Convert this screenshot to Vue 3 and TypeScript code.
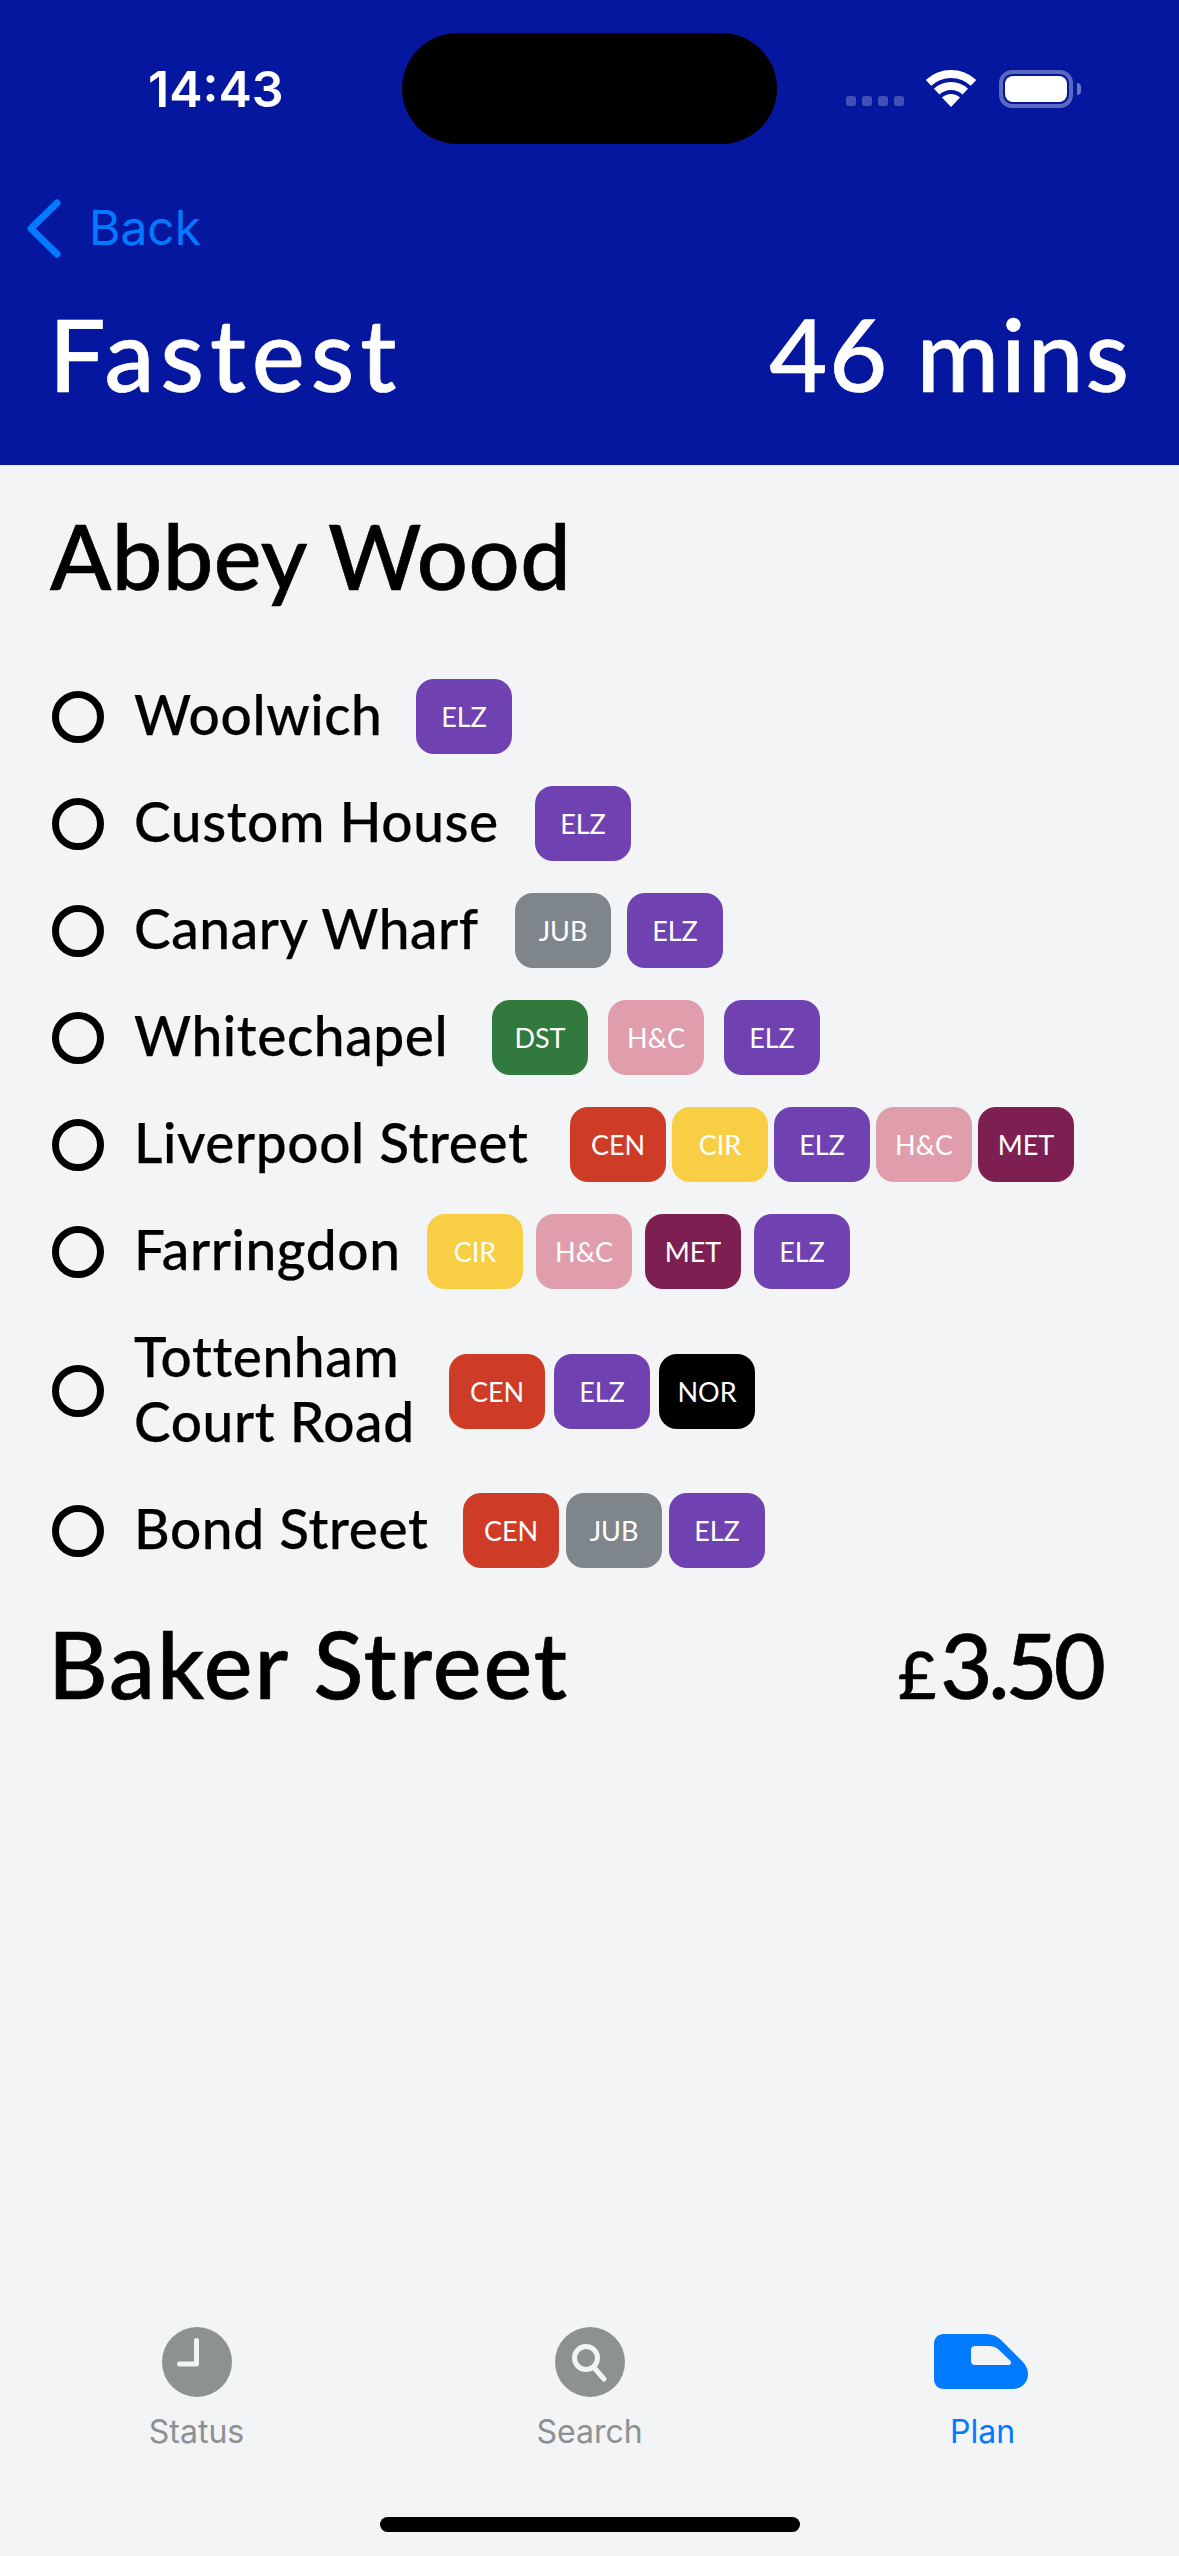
<script setup lang="ts">
type Line = 'CEN' | 'CIR' | 'ELZ' | 'H&C' | 'MET' | 'JUB' | 'DST' | 'NOR'

interface Stop {
  name: string
  nameWidth: number
  gap: number
  lines: Line[]
}

const lineClass: Record<Line, string> = {
  CEN: 'central',
  CIR: 'circle',
  ELZ: 'elizabeth',
  'H&C': 'hammersmith',
  MET: 'metropolitan',
  JUB: 'jubilee',
  DST: 'district',
  NOR: 'northern',
}

// badge start depends on how wide the station name is
const stops: Stop[] = [
  { name: 'Woolwich', nameWidth: 282, gap: 7, lines: ['ELZ'] },
  { name: 'Custom House', nameWidth: 401, gap: 7, lines: ['ELZ'] },
  { name: 'Canary Wharf', nameWidth: 381, gap: 16, lines: ['JUB', 'ELZ'] },
  { name: 'Whitechapel', nameWidth: 358, gap: 20, lines: ['DST', 'H&C', 'ELZ'] },
  { name: 'Liverpool Street', nameWidth: 436, gap: 6, lines: ['CEN', 'CIR', 'ELZ', 'H&C', 'MET'] },
  { name: 'Farringdon', nameWidth: 293, gap: 13, lines: ['CIR', 'H&C', 'MET', 'ELZ'] },
  { name: 'Tottenham Court Road', nameWidth: 315, gap: 9, lines: ['CEN', 'ELZ', 'NOR'] },
  { name: 'Bond Street', nameWidth: 329, gap: 7, lines: ['CEN', 'JUB', 'ELZ'] },
]
</script>

<template>
  <div class="screen">
    <header class="top">
      <div class="status-bar">
        <span class="time">14:43</span>
        <div class="island"></div>
        <div class="dots"><i></i><i></i><i></i><i></i></div>
        <svg class="wifi" width="50" height="37" viewBox="0 0 50 37" fill="none">
          <path d="M2.5 12.9A33 33 0 0 1 47.5 12.9" stroke="#fff" stroke-width="8" />
          <path d="M10.7 21.6A21 21 0 0 1 39.3 21.6" stroke="#fff" stroke-width="8" />
          <path d="M25 37L16 27.5A13 13 0 0 1 34 27.5Z" fill="#fff" />
        </svg>
        <div class="battery"><div class="battery-fill"></div></div>
        <div class="battery-nub"></div>
      </div>

      <div class="back">
        <svg width="38" height="64" viewBox="0 0 38 64" fill="none">
          <path d="M31 7L5 32.5L31 58" stroke="#007AFF" stroke-width="7" stroke-linecap="round" stroke-linejoin="round" />
        </svg>
        <span>Back</span>
      </div>

      <div class="summary">
        <span class="summary-label">Fastest</span>
        <span>46 mins</span>
      </div>
    </header>

    <main class="journey">
      <h1 class="terminus">Abbey Wood</h1>

      <ul class="stops">
        <li v-for="stop in stops" :key="stop.name" class="stop">
          <span class="ring"></span>
          <span class="stop-name" :style="{ width: stop.nameWidth + 'px' }">{{ stop.name }}</span>
          <div class="badges" :style="{ gap: stop.gap + 'px' }">
            <span v-for="line in stop.lines" :key="line" class="badge" :class="lineClass[line]">{{ line }}</span>
          </div>
        </li>
      </ul>

      <div class="destination">
        <span>Baker Street</span>
        <span class="fare"><small>£</small>3.50</span>
      </div>
    </main>

    <nav class="tabs">
      <div class="tab">
        <svg width="70" height="70" viewBox="0 0 70 70">
          <circle cx="35" cy="35" r="35" fill="#8E9192" />
          <path d="M34.5 13.500V37H17.500" fill="none" stroke="#F2F4F6" stroke-width="5" stroke-linecap="round" stroke-linejoin="round" />
        </svg>
        <span>Status</span>
      </div>
      <div class="tab">
        <svg width="70" height="70" viewBox="0 0 70 70">
          <circle cx="35" cy="35" r="35" fill="#8E9192" />
          <circle cx="31" cy="31" r="11.500" fill="none" stroke="#F2F4F6" stroke-width="5" />
          <path d="M38.500 40L49 52" fill="none" stroke="#F2F4F6" stroke-width="5" stroke-linecap="round" />
        </svg>
        <span>Search</span>
      </div>
      <div class="tab active">
        <svg class="train" width="94" height="55" viewBox="0 0 94 55">
          <path
            fill="#007AFF"
            fill-rule="evenodd"
            d="M10 0H52C58 0 63 2 67 6L88 27C92 31 94 35 94 40C94 49 87 55 79 55H10C4 55 0 51 0 45V10C0 4 4 0 10 0ZM41 12C38.500 12 37 13.500 37 16V27C37 29.500 38.500 31 41 31H74C77 31 78 28.500 76 26.500L64 15C61.500 13 59 12 55 12Z"
          />
        </svg>
        <span>Plan</span>
      </div>
    </nav>

    <div class="home-indicator"></div>
  </div>
</template>

<style>
html,
body {
  margin: 0;
  background: #f2f4f6;
}
</style>

<style scoped>
.screen {
  width: 1179px;
  height: 2556px;
  display: flex;
  flex-direction: column;
  background: #f2f4f6;
  color: #000;
  font-family: 'Lato', 'Liberation Sans', sans-serif;
  overflow: hidden;
}

/* header */
.top {
  height: 465px;
  box-sizing: border-box;
  background: #05179e;
  color: #fff;
  padding-top: 33px;
}
.status-bar {
  height: 111px;
  display: flex;
  align-items: center;
  padding-left: 148px;
}
.time {
  width: 254px;
  font-family: 'Inter', sans-serif;
  font-size: 50px;
  font-weight: 600;
  line-height: 1;
}
.island {
  width: 375px;
  height: 111px;
  border-radius: 56px;
  background: #000;
}
.dots {
  display: flex;
  gap: 6px;
  margin-left: 69px;
  margin-top: 25px;
}
.dots i {
  display: block;
  width: 10px;
  height: 10px;
  border-radius: 3px;
  background: rgba(255, 255, 255, 0.25);
}
.wifi {
  margin-left: 22px;
}
.battery {
  width: 74px;
  height: 38px;
  box-sizing: border-box;
  margin-left: 23px;
  padding: 2px;
  border: 4px solid rgba(255, 255, 255, 0.35);
  border-radius: 13px;
}
.battery-fill {
  width: 100%;
  height: 100%;
  border-radius: 8px;
  background: #fff;
}
.battery-nub {
  width: 4px;
  height: 12px;
  margin-left: 4px;
  border-radius: 0 6px 6px 0;
  background: rgba(255, 255, 255, 0.4);
}
.back {
  display: flex;
  align-items: center;
  height: 64px;
  margin-top: 52px;
  padding-left: 26px;
  color: #007aff;
  font-family: 'Inter', sans-serif;
  font-size: 48px;
  line-height: 1;
}
.back span {
  margin-left: 25px;
}
.summary {
  display: flex;
  justify-content: space-between;
  align-items: center;
  margin-top: 38px;
  padding: 0 48px 0 49px;
  font-size: 100px;
  font-weight: 500;
  line-height: 110px;
  letter-spacing: 2px;
  -webkit-text-stroke: 0.7px #fff;
}
.summary-label {
  letter-spacing: 6px;
}

/* journey */
.journey {
  padding: 40px 50px 0;
}
.terminus {
  margin: 0;
  font-size: 90px;
  font-weight: 500;
  line-height: 100px;
  letter-spacing: 0.5px;
  -webkit-text-stroke: 0.7px #000;
}
.stops {
  list-style: none;
  margin: 74px 0 0;
  padding: 0;
  display: flex;
  flex-direction: column;
  gap: 32px;
}
.stop {
  display: flex;
  align-items: center;
  min-height: 75px;
  padding-left: 2px;
}
.ring {
  flex: none;
  width: 52px;
  height: 52px;
  box-sizing: border-box;
  border: 7px solid #000;
  border-radius: 50%;
  margin-right: 30px;
}
.stop-name {
  flex: none;
  padding: 3px 0 7px;
  font-size: 55px;
  font-weight: 500;
  line-height: 65px;
  letter-spacing: 0.6px;
  -webkit-text-stroke: 0.25px #000;
}
.badges {
  display: flex;
}
.badge {
  width: 96px;
  height: 75px;
  display: flex;
  align-items: center;
  justify-content: center;
  border-radius: 18px;
  color: #fff;
  font-size: 27px;
}
.central { background: #ce3c28; }
.circle { background: #f8cf44; }
.elizabeth { background: #6f41b1; }
.hammersmith { background: #e09eac; }
.metropolitan { background: #7e1f52; }
.jubilee { background: #7f868b; }
.district { background: #31793d; }
.northern { background: #000; }

.destination {
  display: flex;
  justify-content: space-between;
  align-items: baseline;
  margin-top: 46px;
  padding-right: 27px;
  font-size: 92px;
  font-weight: 500;
  line-height: 100px;
  letter-spacing: 2px;
  -webkit-text-stroke: 0.7px #000;
}
.destination > span:first-child {
  margin-left: -2px;
}
.fare {
  font-size: 90px;
  letter-spacing: -4px;
}
.fare small {
  font-size: 66px;
  margin-right: 8px;
}

/* tab bar */
.tabs {
  margin-top: auto;
  display: grid;
  grid-template-columns: repeat(3, 393px);
  color: #8e9192;
  font-family: 'Inter', sans-serif;
  font-size: 32px;
}
.tab {
  height: 124px;
  display: flex;
  flex-direction: column;
  align-items: center;
  justify-content: space-between;
}
.tab.active {
  color: #007aff;
}
.train {
  margin-top: 7px;
  margin-right: 3px;
}
.home-indicator {
  width: 420px;
  height: 15px;
  margin: 66px auto 24px;
  border-radius: 8px;
  background: #000;
}
</style>
